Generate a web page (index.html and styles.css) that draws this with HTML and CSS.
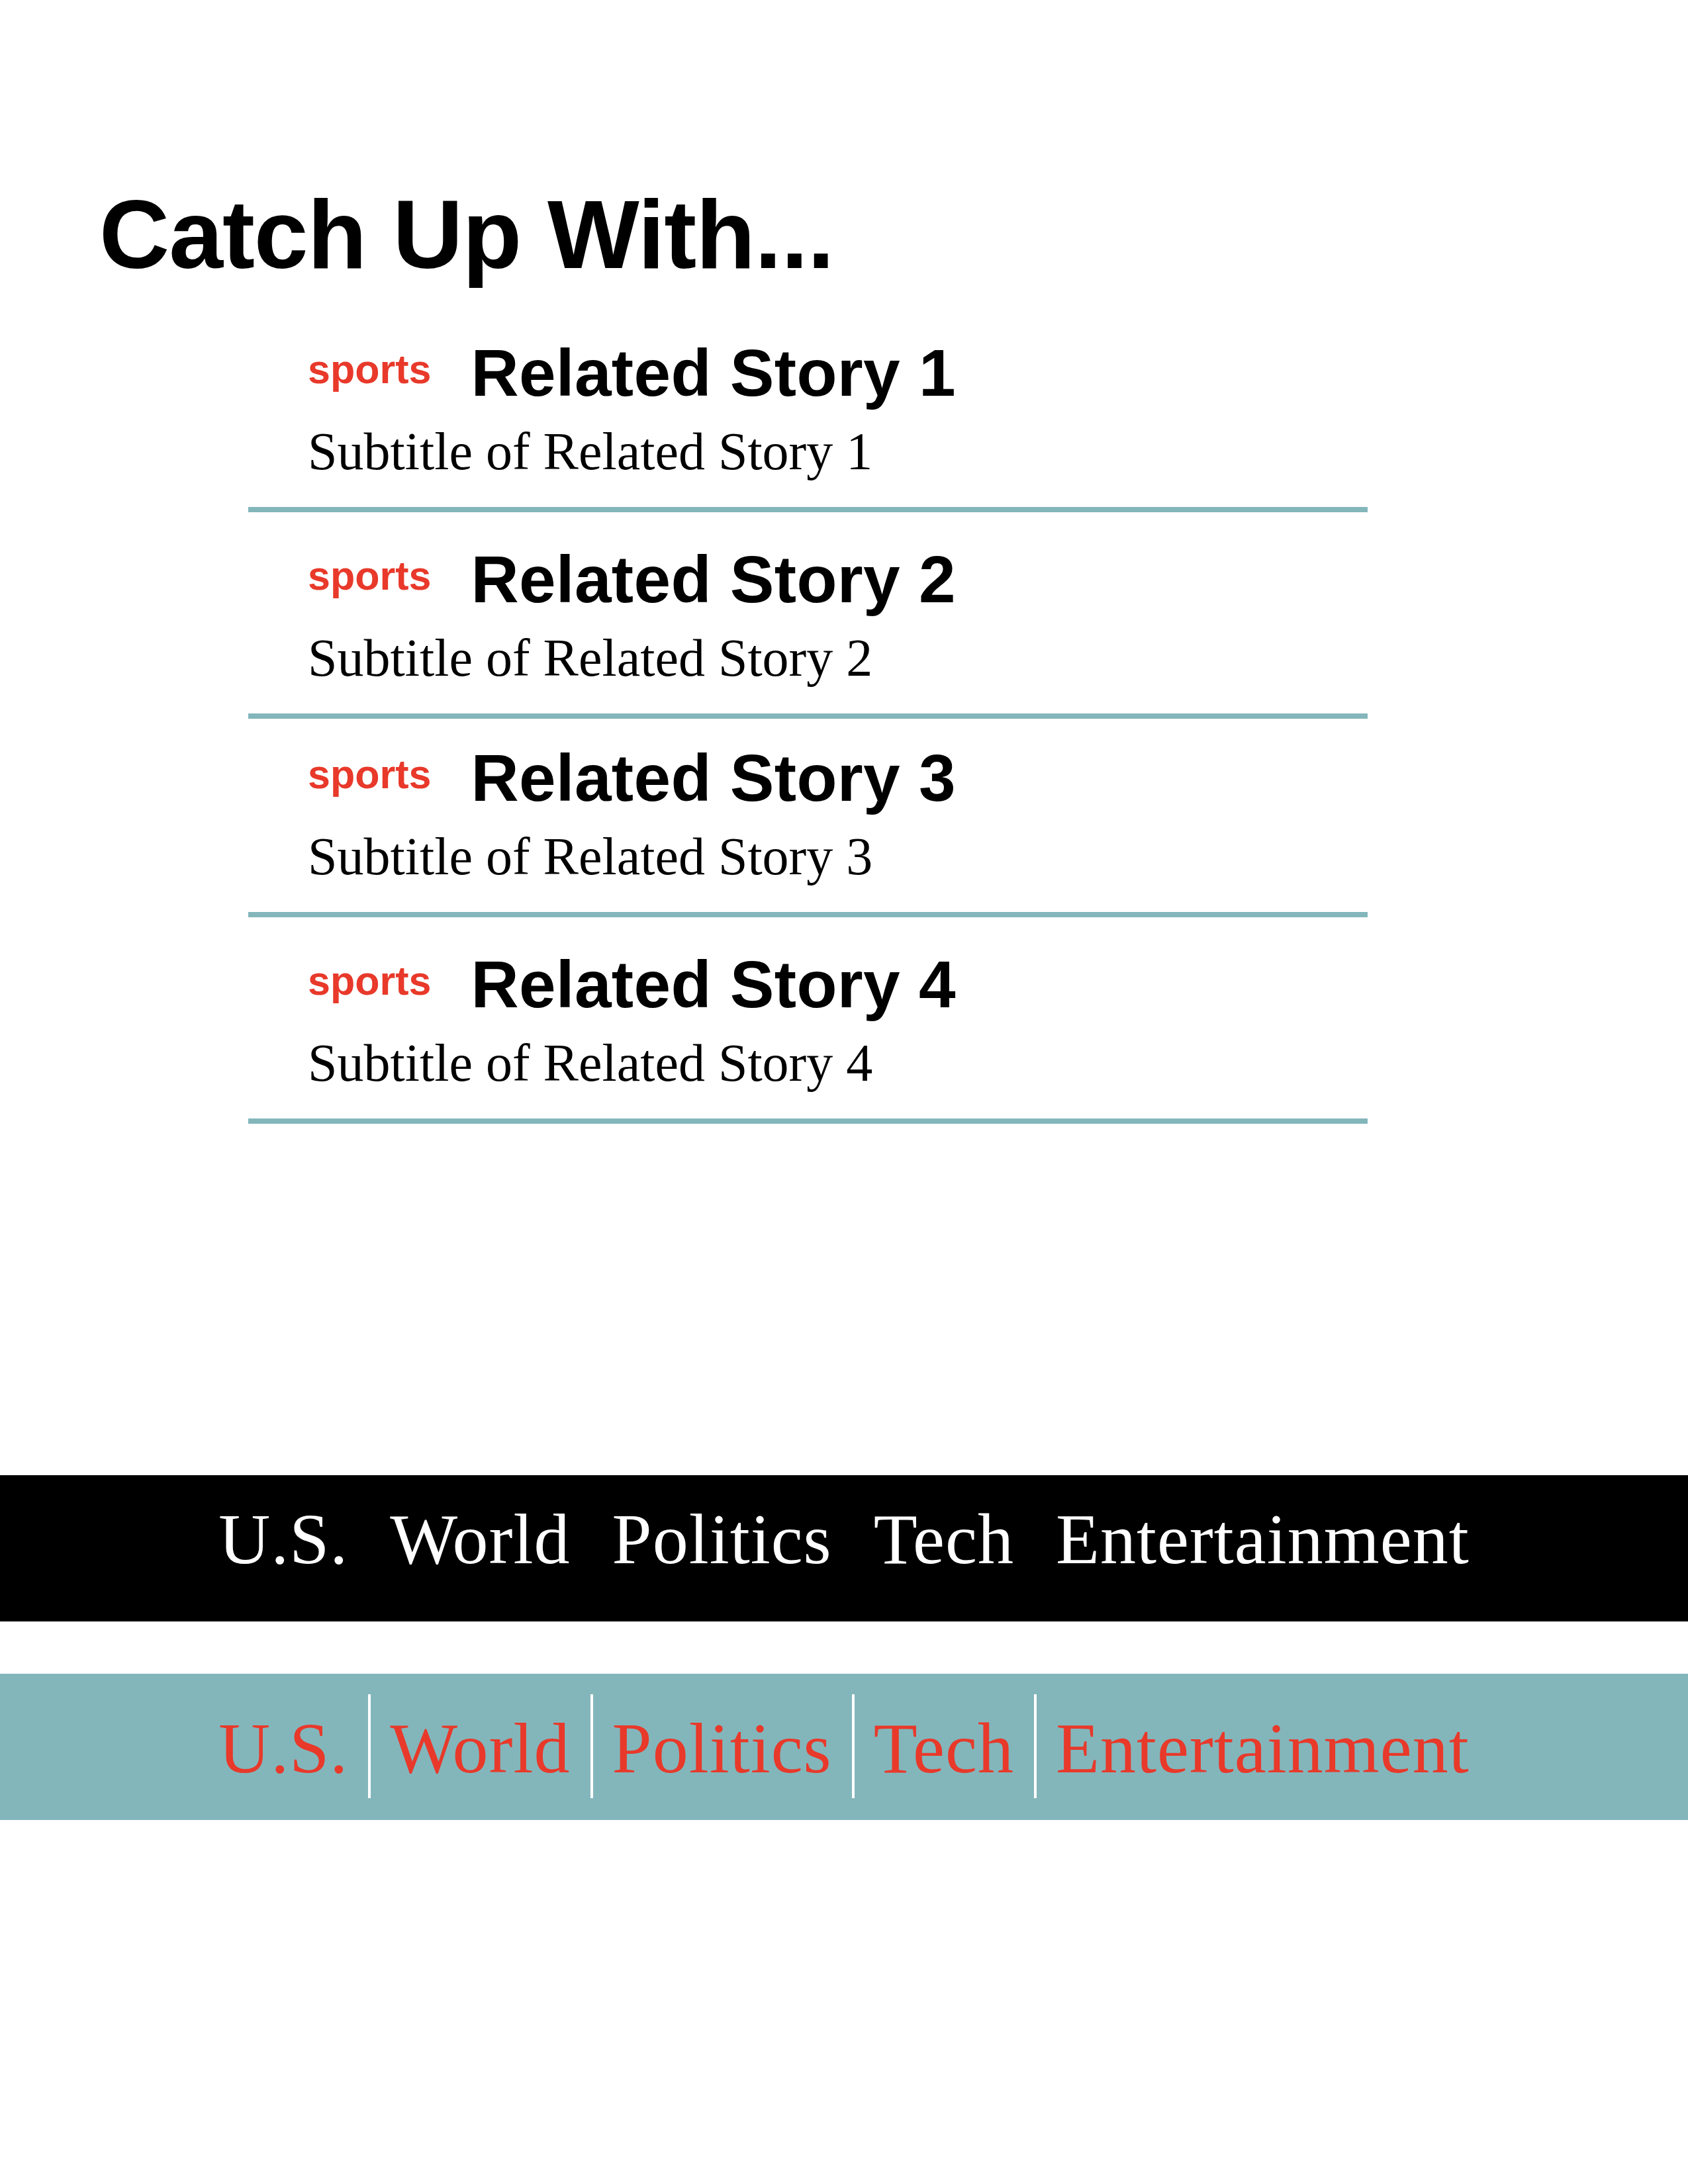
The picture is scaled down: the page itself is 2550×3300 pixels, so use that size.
FILE: index.html
```html
<!DOCTYPE html>
<html lang="en">
<head>
<meta charset="utf-8">
<title>Catch Up With...</title>
<link rel="stylesheet" href="styles.css">
</head>
<body>
<main class="page">
  <section class="catchup">
    <h1 class="catchup__title">Catch Up With...</h1>
    <ul class="stories">
      <li class="story">
        <div class="story__head">
          <span class="story__kicker">sports</span>
          <h2 class="story__title">Related Story 1</h2>
        </div>
        <p class="story__sub">Subtitle of Related Story 1</p>
      </li>
      <li class="story">
        <div class="story__head">
          <span class="story__kicker">sports</span>
          <h2 class="story__title">Related Story 2</h2>
        </div>
        <p class="story__sub">Subtitle of Related Story 2</p>
      </li>
      <li class="story story--tight">
        <div class="story__head">
          <span class="story__kicker">sports</span>
          <h2 class="story__title">Related Story 3</h2>
        </div>
        <p class="story__sub">Subtitle of Related Story 3</p>
      </li>
      <li class="story">
        <div class="story__head">
          <span class="story__kicker">sports</span>
          <h2 class="story__title">Related Story 4</h2>
        </div>
        <p class="story__sub">Subtitle of Related Story 4</p>
      </li>
    </ul>
  </section>

  <nav class="navbar navbar--dark">
    <ul class="navbar__list">
      <li class="navbar__item">U.S.</li>
      <li class="navbar__item">World</li>
      <li class="navbar__item">Politics</li>
      <li class="navbar__item">Tech</li>
      <li class="navbar__item">Entertainment</li>
    </ul>
  </nav>

  <nav class="navbar navbar--teal">
    <ul class="navbar__list">
      <li class="navbar__item">U.S.</li>
      <li class="navbar__item">World</li>
      <li class="navbar__item">Politics</li>
      <li class="navbar__item">Tech</li>
      <li class="navbar__item">Entertainment</li>
    </ul>
  </nav>
</main>
</body>
</html>
```

FILE: styles.css
```css
html, body {
  margin: 0;
  padding: 0;
  background: #ffffff;
}

.page {
  padding-top: 281px;
}

.catchup__title {
  margin: 0 0 0 150px;
  font-family: "Liberation Sans", Arial, sans-serif;
  font-weight: 700;
  font-size: 147px;
  line-height: 1;
  letter-spacing: -1px;
  color: #000000;
}

.stories {
  list-style: none;
  margin: 34px 0 0 375px;
  padding: 0;
  width: 1691px;
}

.story {
  padding: 51px 0 44px 90px;
  border-bottom: 8px solid #83b6bb;
}

.story--tight {
  padding-top: 39px;
}

.story__head {
  display: flex;
  align-items: flex-start;
  gap: 60px;
}

.story__kicker {
  margin-top: 15px;
  font-family: "Liberation Sans", Arial, sans-serif;
  font-weight: 700;
  font-size: 61px;
  line-height: 1;
  color: #e8392a;
}

.story__title {
  margin: 0;
  font-family: "Liberation Sans", Arial, sans-serif;
  font-weight: 700;
  font-size: 100px;
  line-height: 1;
  letter-spacing: 0.3px;
  color: #000000;
}

.story__sub {
  margin: 29px 0 0;
  font-family: "Liberation Serif", "Times New Roman", serif;
  font-weight: 400;
  font-size: 80px;
  line-height: 1;
  color: #000000;
}

.navbar {
  font-family: "Liberation Serif", "Times New Roman", serif;
  font-size: 108px;
  line-height: 1;
  letter-spacing: 1px;
}

.navbar__list {
  list-style: none;
  margin: 0;
  padding: 0;
  display: flex;
  justify-content: center;
}

.navbar__item {
  white-space: nowrap;
}

.navbar__item + .navbar__item {
  margin-left: 30px;
  padding-left: 29px;
  border-left: 4px solid transparent;
}

.navbar--dark {
  margin-top: 531px;
  background: #000000;
  color: #ffffff;
}

.navbar--dark .navbar__item {
  padding-top: 43px;
  padding-bottom: 70px;
}

.navbar--teal {
  margin-top: 79px;
  padding: 31px 0 33px;
  background: #83b6bb;
  color: #e8392a;
}

.navbar--teal .navbar__item {
  padding-top: 28px;
  padding-bottom: 21px;
}

.navbar--teal .navbar__item + .navbar__item {
  border-left-color: #ffffff;
}
```
